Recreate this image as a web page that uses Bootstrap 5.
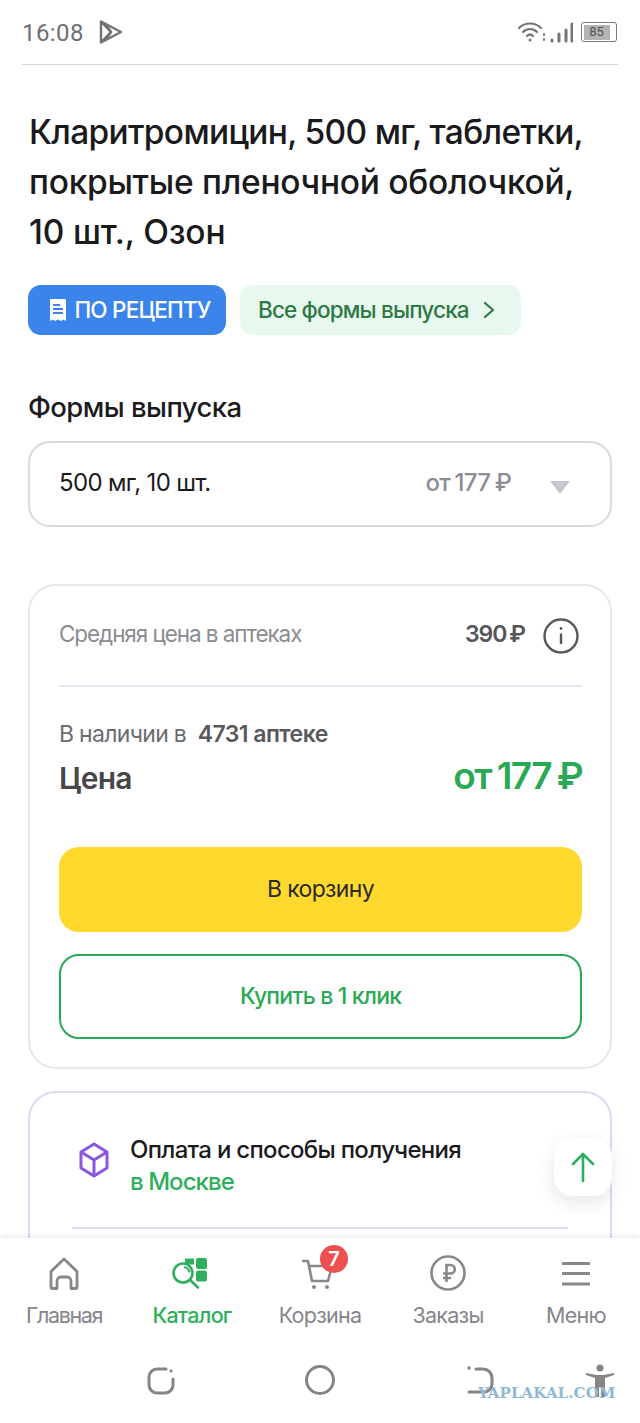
<!DOCTYPE html>
<html lang="ru">
<head>
<meta charset="utf-8">
<title>Кларитромицин</title>
<link href="https://cdn.jsdelivr.net/npm/bootstrap@5.3.0/dist/css/bootstrap.min.css" rel="stylesheet">
<style>
html,body{height:1423px;overflow:hidden}
body{font-family:Inter,"Noto Sans","Liberation Sans",sans-serif;color:#1b1b1d;background:#fff;width:640px;position:relative}
.stat{height:64px;padding:0 23px 0 22px;color:#6f6f72;background:#fff;position:relative;z-index:2}
.stat-time{font-family:Roboto,sans-serif;font-size:24px;letter-spacing:.4px;line-height:1;margin-top:2px}
.play{margin-left:14px}
.batt{width:36px;height:20px;border:1.5px solid #777;border-radius:3px;padding:1.5px;display:flex}
.batt span{display:block;background:#b3b3b3;width:84%;font:13px/14px Roboto,sans-serif;color:#555;text-align:center}
.rule{height:1px;margin:0 22px;background:#d6d6da}
.fade{height:16px;background:linear-gradient(#e9e9ec,#fff)}
.main-col{padding:0 29px}
.ttl{font-size:33.5px;font-weight:500;line-height:50px;margin:26px 0 0;color:#1a1a1c;white-space:nowrap}
.ttl span{display:block}
.ln1{letter-spacing:-.7px}
.ln2{letter-spacing:-.28px}
.ln3{letter-spacing:-.15px}
.chips{margin-top:28px;gap:14px}
.chip-rx{height:50px;width:198px;border-radius:13px;background:#3a84ec;color:#fff;font-size:22.5px;font-weight:500;letter-spacing:-.8px;margin-left:-1px;gap:7px;padding-left:6px}
.chip-all{height:50px;width:281px;border-radius:13px;background:#e9f8ee;color:#2d7a45;font-size:22.5px;font-weight:500;letter-spacing:-.85px;padding:0 26px 0 18px}
.h-forms{font-size:27.5px;font-weight:500;letter-spacing:-.55px;line-height:34px;margin:55px 0 17px -1px}
.sel{height:86px;border:2px solid #d9d9df;border-radius:22px;padding:0 40px 0 29px;font-size:24px;letter-spacing:-.65px;margin:0 0 0 -1px;width:584px}
.sel span:first-child{margin-top:-2px}
.sel-from{color:#8c8c94;font-weight:500;margin-right:39px;letter-spacing:-.8px;word-spacing:-1px;margin-top:-2px}
.tri{width:0;height:0;border-left:10px solid transparent;border-right:10px solid transparent;border-top:13px solid #c6c6d2;margin-top:6px}
.panel{border:2px solid #e6e6ec;border-radius:28px;width:584px;margin-left:-1px;background:#fff}
.p1{margin-top:57px;height:485px;padding:0 28px 0 29px}
.avg{height:101px;border-bottom:2px solid #e6e6f0;font-size:22.5px;letter-spacing:-1.08px;color:#8b8b92}
.avg span{margin-top:-3px}
.avg b{font-weight:600;color:#55555a;margin-right:18px;font-size:23px;letter-spacing:-1px;word-spacing:-2px;margin-top:-3px}
.avg svg{margin-right:3px}
.avl{font-size:23px;letter-spacing:-.7px;color:#6c6c70;line-height:30px;margin-top:32px}
.avl b{font-weight:600;color:#59595d;letter-spacing:-.55px}
.pr-l{font-size:30px;font-weight:600;letter-spacing:-.8px;color:#47474b;margin-top:-2px}
.pr-r{font-size:37px;font-weight:600;letter-spacing:-1.6px;word-spacing:-2px;color:#2aa955;line-height:40px;margin-top:-6px}
.pr{margin-top:8px;height:44px}
.btn-cart{height:85px;border-radius:20px;background:#ffd92e;border:0;color:#2a2a2a;font-size:23px;letter-spacing:-.65px;width:100%;margin-top:46px}
.btn-cart:hover{background:#ffd92e}
.btn-one{height:85px;border-radius:20px;background:#fff;border:2px solid #2aa955;color:#2aa955;font-size:23px;font-weight:500;letter-spacing:-.85px;width:100%;margin-top:22px}
.p2{margin-top:22px;border-color:#e0d8f5;height:300px;padding:0 42px;}
.pay{padding:41px 0 29px 6px;border-bottom:2px solid #e0d8f5;gap:20px}
.pay-t{font-size:24px;font-weight:500;letter-spacing:-.7px;line-height:32px;color:#1b1b1d}
.pay-s{font-size:24px;font-weight:500;letter-spacing:-.95px;line-height:32px;color:#2fae5d}
.up{position:absolute;left:554px;top:1138px;width:58px;height:58px;background:#fff;border-radius:18px;box-shadow:0 6px 18px rgba(0,0,0,.1);z-index:3}
.tabs{position:absolute;left:0;right:0;top:1238px;height:185px;background:#fff;box-shadow:0 -2px 6px rgba(0,0,0,.09);z-index:4}
.tabrow{height:100px}
.tab{width:128px;font-size:21.5px;letter-spacing:-.75px;color:#85858b;line-height:28px;padding-top:16px;position:relative}
.tab svg{display:block;margin:0 auto 7px;height:40px}
.tab.on{color:#2fae5d;font-weight:500}
.tab-home{letter-spacing:-1.4px}
.ic-cart{transform:translateX(-1px)}
.ic-rub{transform:translateY(-1px)}
.cnt{position:absolute;left:64px;top:7px;width:28px;height:28px;border-radius:50%;background:#f04f4f;color:#fff;font-size:20px;font-weight:600;line-height:28px;text-align:center;letter-spacing:0}
.sysrow{position:relative;height:85px}
.sysrow svg{position:absolute}
.sys1{left:146px;top:28px}
.sys2{left:304px;top:26px}
.sys3{left:466px;top:26px}
.sys4{left:585px;top:25px}
.wm{position:absolute;left:478px;top:1385px;z-index:5;font:bold 15px/16px "DejaVu Serif",serif;color:#8fb8d4;letter-spacing:.1px}
</style>
</head>
<body>
<div class="stat d-flex align-items-center">
  <span class="stat-time">16:08</span>
  <svg class="play" width="26" height="26" viewBox="0 0 26 26" fill="none" stroke="#747477" stroke-width="2.500" stroke-linejoin="round"><path d="M3 2.500 23 13 3 23.500Z"/><path d="M3 2.500 13 13 3 23.500"/><path d="M8 6 13 13 8 20"/></svg>
  <div class="ms-auto d-flex align-items-center">
    <svg width="56" height="26" viewBox="0 0 56 26" fill="none" stroke="#747477" stroke-linecap="round"><path d="M2 9C8 3 18 3 24 9" stroke-width="2.200"/><path d="M6 13C10 9 16 9 20 13" stroke-width="2.200"/><path d="M10 17c2-2 4-2 6 0" stroke-width="2.200"/><circle cx="13" cy="21" r="1.500" fill="#747477" stroke="none"/><path d="M27 15v1M27 20v1" stroke-width="2"/><path d="M35 21v1M42 15v7M49 11v11M55 5v17" stroke-width="3"/></svg>
    <div class="batt ms-2"><span>85</span></div>
  </div>
</div>
<div class="rule"></div>
<div class="fade"></div>
<div class="main-col">
  <h1 class="ttl"><span class="ln1">Кларитромицин, 500 мг, таблетки,</span><span class="ln2">покрытые пленочной оболочкой,</span><span class="ln3">10 шт., Озон</span></h1>
  <div class="chips d-flex">
    <div class="chip-rx d-flex align-items-center justify-content-center">
      <svg width="18" height="24" viewBox="0 0 18 24"><path fill="#fff" d="M2 1h14a1 1 0 0 1 1 1v21l-2.600-1.600L12 23l-3-1.600L6 23l-2.400-1.600L1 23V2a1 1 0 0 1 1-1Z"/><path stroke="#3a84ec" stroke-width="2" d="M4 7h7M4 11h10M4 15h10"/></svg>
      <span>ПО РЕЦЕПТУ</span>
    </div>
    <div class="chip-all d-flex align-items-center justify-content-between">
      <span>Все формы выпуска</span>
      <svg width="12" height="18" viewBox="0 0 12 18" fill="none" stroke="#2d7a45" stroke-width="2.200" stroke-linecap="round" stroke-linejoin="round"><path d="M2 2l8 7-8 7"/></svg>
    </div>
  </div>
  <h2 class="h-forms">Формы выпуска</h2>
  <div class="sel d-flex align-items-center">
    <span class="me-auto">500 мг, 10 шт.</span>
    <span class="sel-from">от 177 ₽</span>
    <span class="tri"></span>
  </div>
  <div class="panel p1">
    <div class="avg d-flex align-items-center">
      <span class="me-auto">Средняя цена в аптеках</span>
      <b>390 ₽</b>
      <svg width="36" height="36" viewBox="0 0 36 36" fill="none" stroke="#58585c" stroke-width="2.400"><circle cx="18" cy="18" r="16.500"/><path d="M18 15.500V26"/><circle cx="18" cy="10.500" r="1.400" fill="#58585c" stroke="none"/></svg>
    </div>
    <div class="avl">В наличии в&nbsp; <b>4731 аптеке</b></div>
    <div class="pr d-flex align-items-center justify-content-between">
      <span class="pr-l">Цена</span>
      <span class="pr-r">от 177 ₽</span>
    </div>
    <button class="btn btn-cart d-block" type="button">В корзину</button>
    <button class="btn btn-one d-block" type="button">Купить в 1 клик</button>
  </div>
  <div class="panel p2">
    <div class="pay d-flex align-items-start">
      <svg class="mt-2" width="32" height="36" viewBox="0 0 32 36" fill="none" stroke="#8a56e2" stroke-width="3" stroke-linejoin="round"><path d="M16 2 29 10v16L16 34 3 26V10Z"/><path d="M3 10l13 8 13-8M16 18v16"/></svg>
      <div>
        <div class="pay-t">Оплата и способы получения</div>
        <div class="pay-s">в Москве</div>
      </div>
    </div>
  </div>
</div>
<div class="up d-flex align-items-center justify-content-center">
  <svg width="26" height="32" viewBox="0 0 26 32" fill="none" stroke="#2fae5d" stroke-width="2.600" stroke-linecap="round" stroke-linejoin="round"><path d="M13 30V3M3 13 13 3l10 10"/></svg>
</div>
<nav class="tabs">
  <div class="tabrow d-flex">
    <div class="tab tab-home text-center">
      <svg width="32" height="40" viewBox="0 0 32 40" fill="none" stroke="#87878d" stroke-width="2.800" stroke-linejoin="round"><path d="M3 33V17.500L16 5l13 12.500V33a1.500 1.500 0 0 1-1.500 1.500H23V27a4 4 0 0 0-4-4h-6a4 4 0 0 0-4 4v7.500H4.500A1.500 1.500 0 0 1 3 33Z"/></svg>
      Главная
    </div>
    <div class="tab on text-center">
      <svg width="40" height="40" viewBox="0 0 40 40"><path d="M13 4.500h9v6h-9z" fill="#2fae5d"/><rect x="24" y="4" width="11" height="11" rx="2" fill="#2fae5d"/><rect x="24" y="16.500" width="11" height="11" rx="2" fill="#2fae5d"/><circle cx="11" cy="19" r="9.500" fill="#fff" stroke="#2fae5d" stroke-width="2.600"/><path d="M18 26l8 7.500" stroke="#2fae5d" stroke-width="2.600" stroke-linecap="round"/><path d="M12 13c3 .5 5 2.500 5.500 5.500" fill="none" stroke="#2fae5d" stroke-width="2"/></svg>
      Каталог
    </div>
    <div class="tab text-center">
      <svg class="ic-cart" width="34" height="40" viewBox="0 0 34 40" fill="none" stroke="#87878d" stroke-width="2.600" stroke-linecap="round" stroke-linejoin="round"><path d="M1 7h5l4 20h16l4-15H8"/><circle cx="12" cy="33" r="2" fill="#87878d" stroke="none"/><circle cx="25" cy="33" r="2" fill="#87878d" stroke="none"/></svg>
      <span class="cnt">7</span>
      Корзина
    </div>
    <div class="tab text-center">
      <svg class="ic-rub" width="36" height="40" viewBox="0 0 36 40" fill="none" stroke="#87878d" stroke-width="2.600"><circle cx="18" cy="20" r="16.500"/><path d="M16.500 29V12h4a4 4 0 0 1 0 8.500H13M13 25h8"/></svg>
      Заказы
    </div>
    <div class="tab text-center">
      <svg width="30" height="40" viewBox="0 0 30 40" fill="none" stroke="#87878d" stroke-width="2.800"><path d="M1 9.500h28M1 19.500h28M1 30h28"/></svg>
      Меню
    </div>
  </div>
  <div class="sysrow">
    <svg class="sys1" width="30" height="30" viewBox="0 0 30 30" fill="none" stroke="#858588" stroke-width="3" stroke-linecap="round"><path d="M20 3H11A8 8 0 0 0 3 11v8a8 8 0 0 0 8 8h8a8 8 0 0 0 8-8v-6"/><circle cx="25" cy="5" r="1.600" fill="#858588" stroke="none"/></svg>
    <svg class="sys2" width="32" height="32" viewBox="0 0 32 32" fill="none" stroke="#858588" stroke-width="3"><circle cx="16" cy="16" r="13.500"/></svg>
    <svg class="sys3" width="30" height="32" viewBox="0 0 30 32" fill="none" stroke="#858588" stroke-width="3" stroke-linecap="round"><path d="M10 5h7a9 9 0 0 1 9 9v6a8 8 0 0 1-8 8H3"/><circle cx="3" cy="4" r="1.800" fill="#858588" stroke="none"/></svg>
    <svg class="sys4" width="30" height="36" viewBox="0 0 30 36"><circle cx="15" cy="5" r="3.500" fill="#858588"/><path d="M1 10l10 2h8l10-2v2l-9 3v19h-4V24h-2v10h-4V15L1 12Z" fill="#858588"/></svg>
  </div>
</nav>
<div class="wm">YAPLAKAL.COM</div>
<script src="https://cdn.jsdelivr.net/npm/bootstrap@5.3.0/dist/js/bootstrap.bundle.min.js"></script>
</body>
</html>
